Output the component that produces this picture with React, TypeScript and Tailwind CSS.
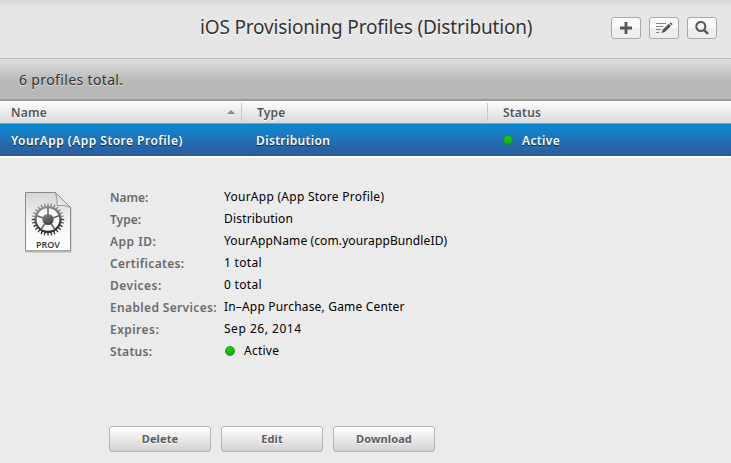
import type { ReactNode } from "react";

const details: { label: string; value: string; ls: string; vs: string }[] = [
  { label: "Name:", value: "YourApp (App Store Profile)", ls: "tracking-[0px]", vs: "tracking-[0.26px]" },
  { label: "Type:", value: "Distribution", ls: "tracking-[0px]", vs: "tracking-[0.18px]" },
  { label: "App ID:", value: "YourAppName (com.yourappBundleID)", ls: "tracking-[0.5px]", vs: "tracking-[0.11px]" },
  { label: "Certificates:", value: "1 total", ls: "tracking-[0.33px]", vs: "tracking-[0.3px]" },
  { label: "Devices:", value: "0 total", ls: "tracking-[0.5px]", vs: "tracking-[0.3px]" },
  { label: "Enabled Services:", value: "In–App Purchase, Game Center", ls: "tracking-[0.35px]", vs: "tracking-[0.18px]" },
  { label: "Expires:", value: "Sep 26, 2014", ls: "tracking-[0.45px]", vs: "tracking-[0.52px]" },
  { label: "Status:", value: "Active", ls: "tracking-[0.3px]", vs: "tracking-[0.25px]" },
];

// Tooth angles around the gear's rim, in degrees.
const teeth = Array.from({ length: 28 }, (_, i) => (i * 360) / 28);

function Dot() {
  return <span className="h-[10px] w-[10px] shrink-0 rounded-full border border-[#0d9a12] bg-linear-to-b from-[#1fd000] to-[#0cad0c]" />;
}

function IconButton({ label, children }: { label: string; children: ReactNode }) {
  return (
    <button aria-label={label} className="flex h-[22px] w-[30px] items-center justify-center rounded-[3px] border border-[#a9a9a9] bg-linear-to-b from-[#fafafa] from-50% to-[#eeeeee] to-50%">
      {children}
    </button>
  );
}

function ActionButton({ children }: { children: ReactNode }) {
  return (
    <button className="h-[26px] w-[102px] rounded-[3px] border border-[#b4b4b4] bg-linear-to-b from-white to-[#d2d2d2] text-[11px] leading-[24px] font-bold tracking-[0.1px] text-[#5c5c5c] [text-shadow:0_1px_0_#fff]">
      {children}
    </button>
  );
}

function ProfileIcon() {
  return (
    <svg width="50" height="64" viewBox="0 0 50 64" className="block">
      <defs>
        <linearGradient id="paper" x1="0" y1="0" x2="0" y2="1">
          <stop offset="0" stopColor="#d6d6d6" />
          <stop offset="0.55" stopColor="#f6f6f6" />
          <stop offset="1" stopColor="#fff" />
        </linearGradient>
        <linearGradient id="gear" gradientUnits="userSpaceOnUse" x1="18" y1="11" x2="28" y2="44">
          <stop offset="0" stopColor="#a8a8a8" />
          <stop offset="0.5" stopColor="#5e5e5e" />
          <stop offset="1" stopColor="#1e1e1e" />
        </linearGradient>
        <linearGradient id="hub" x1="0" y1="0" x2="0.4" y2="1">
          <stop offset="0" stopColor="#858585" />
          <stop offset="1" stopColor="#444" />
        </linearGradient>
        <linearGradient id="fold" x1="0" y1="1" x2="0.6" y2="0.3">
          <stop offset="0" stopColor="#fff" />
          <stop offset="1" stopColor="#d0d0d0" />
        </linearGradient>
      </defs>
      <path d="M1 2H33L47.5 17V60.8H1Z" fill="#000" opacity="0.16" />
      <path d="M1.5 0.5H31.5L46.5 15.5V58.8H1.5Z" fill="url(#paper)" stroke="#8a8a8a" />
      <path d="M31.5 0.5Q34 9 33 13.5Q39 12.5 46.5 15.5Z" fill="url(#fold)" stroke="#858585" strokeWidth="0.8" />
      <circle cx="24" cy="27.5" r="12" fill="#f8f8f8" />
      <circle cx="24" cy="27.5" r="12.4" fill="none" stroke="url(#gear)" strokeWidth="2.2" />
      {teeth.map((a) => (
        <path key={a} d="M23.2 14.8L23.5 11.2H24.5L24.8 14.8Z" fill={a > 80 && a < 280 ? "#303030" : "#828282"} transform={`rotate(${a} 24 27.5)`} />
      ))}
      <g stroke="#666" strokeWidth="1.6">
        <path d="M24 27.5L35.4 23.8" />
        <path d="M24 27.5L31 37.2" />
        <path d="M24 27.5L17 37.2" />
        <path d="M24 27.5L12.6 23.8" />
        <path d="M24 27.5V15.5" />
      </g>
      <circle cx="24" cy="27.5" r="5.6" fill="url(#hub)" />
      <circle cx="24" cy="27.5" r="1.6" fill="#444" stroke="#8a8a8a" strokeWidth="0.6" />
      <text x="24" y="55.5" textAnchor="middle" fill="#333" className="font-['Open_Sans',sans-serif] text-[9px] font-semibold">PROV</text>
    </svg>
  );
}

export default function App() {
  return (
    <div className="h-[463px] w-full overflow-hidden bg-[#ebebeb] font-['Noto_Sans',sans-serif] text-[12px] text-black">
      <header className="grid h-[59px] grid-cols-[200px_1fr_120px] border-b border-[#bebebe] bg-linear-to-b from-[#d6d6d6] to-[#e6e6e6] to-[8px]">
        <h1 className="col-start-2 pt-[13px] text-[19px] leading-[28px] tracking-[-0.17px] whitespace-nowrap text-[#333] [text-shadow:0_1px_0_#fff]">iOS Provisioning Profiles (Distribution)</h1>
        <div className="flex gap-2 pt-[17px]">
          <IconButton label="Add">
            <svg width="14" height="14" viewBox="0 0 14 14"><path d="M7 1V13M1 7H13" stroke="#555" strokeWidth="2.8" /></svg>
          </IconButton>
          <IconButton label="Edit">
            <svg width="18" height="12" viewBox="0 0 18 12">
              <path d="M1 1.5H11M1 4.5H8.5M1 7.5H6M1 10.5H4.5" stroke="#888" />
              <path d="M6.5 11L7.7 7.7L13.8 1.8L16 4L9.8 9.9ZM14.5 1.2L15.6 0.2L17.7 2.2L16.7 3.3Z" fill="#555" />
            </svg>
          </IconButton>
          <IconButton label="Search">
            <svg width="14" height="14" viewBox="0 0 14 14" fill="none" stroke="#5b5b5b"><circle cx="5.8" cy="5.5" r="4.5" strokeWidth="2.1" /><path d="M8.8 8.6L13 12.8" strokeWidth="2.6" /></svg>
          </IconButton>
        </div>
      </header>

      <div className="h-[42px] border-b-2 border-[#999] bg-linear-to-b from-[#dedede] to-[#b8b8b8] to-55% pl-[19px] text-[14px] leading-[41px] tracking-[0.36px] text-[#333] [text-shadow:0_1px_0_#ddd]">
        <span>6 profiles total.</span>
      </div>

      <div className="flex h-[23px] border-b border-[#999] bg-linear-to-b from-[#fdfdfd] to-[#dadada] py-[2px] text-[12px] leading-[20px] font-semibold tracking-[0.2px] text-[#555] [text-shadow:0_1px_0_#fff]">
        <div className="flex h-[18px] w-[242px] items-center justify-between border-r border-[#c8c8c8] pr-[6px] pl-[11px]">
          <span className="pt-px">Name</span>
          <svg width="8" height="4" viewBox="0 0 8 4"><path d="M0 4L4 0L8 4Z" fill="#888" /></svg>
        </div>
        <div className="h-[18px] w-[246px] border-r border-[#c8c8c8] pl-[15px]"><span>Type</span></div>
        <div className="h-[18px] pl-[15px]"><span>Status</span></div>
      </div>

      <div className="flex h-[34px] border-b-2 border-white bg-[#285a9b] bg-linear-to-b from-[#008ad2] to-[#2a5a9b] text-[12px] leading-[33px] font-semibold text-white [text-shadow:0_1px_1px_#123]">
        <div className="w-[256px] pl-[11px] tracking-[0.47px]"><span>YourApp (App Store Profile)</span></div>
        <div className="w-[247px] tracking-[0.35px]"><span>Distribution</span></div>
        <div className="flex items-center gap-[9px] tracking-[0.35px]"><Dot /><span>Active</span></div>
      </div>

      <main className="flex pt-[28px]">
        <div className="w-[110px] pt-[6px] pl-[24px]"><ProfileIcon /></div>
        <dl className="grid grid-cols-[114px_1fr] auto-rows-[22px] leading-[22px] whitespace-nowrap">
          {details.map((d) => (
            <div key={d.label} className="contents">
              <dt className="pt-px text-[12px] font-semibold text-[#6a6a6a]"><span className={d.ls}>{d.label}</span></dt>
              <dd className="flex items-center">
                {d.label === "Status:" && <span className="flex w-5 pl-px"><Dot /></span>}
                <span className={d.vs}>{d.value}</span>
              </dd>
            </div>
          ))}
        </dl>
      </main>

      <div className="mt-[64px] flex gap-[10px] pl-[109px]">
        <ActionButton>Delete</ActionButton>
        <ActionButton>Edit</ActionButton>
        <ActionButton>Download</ActionButton>
      </div>
    </div>
  );
}
